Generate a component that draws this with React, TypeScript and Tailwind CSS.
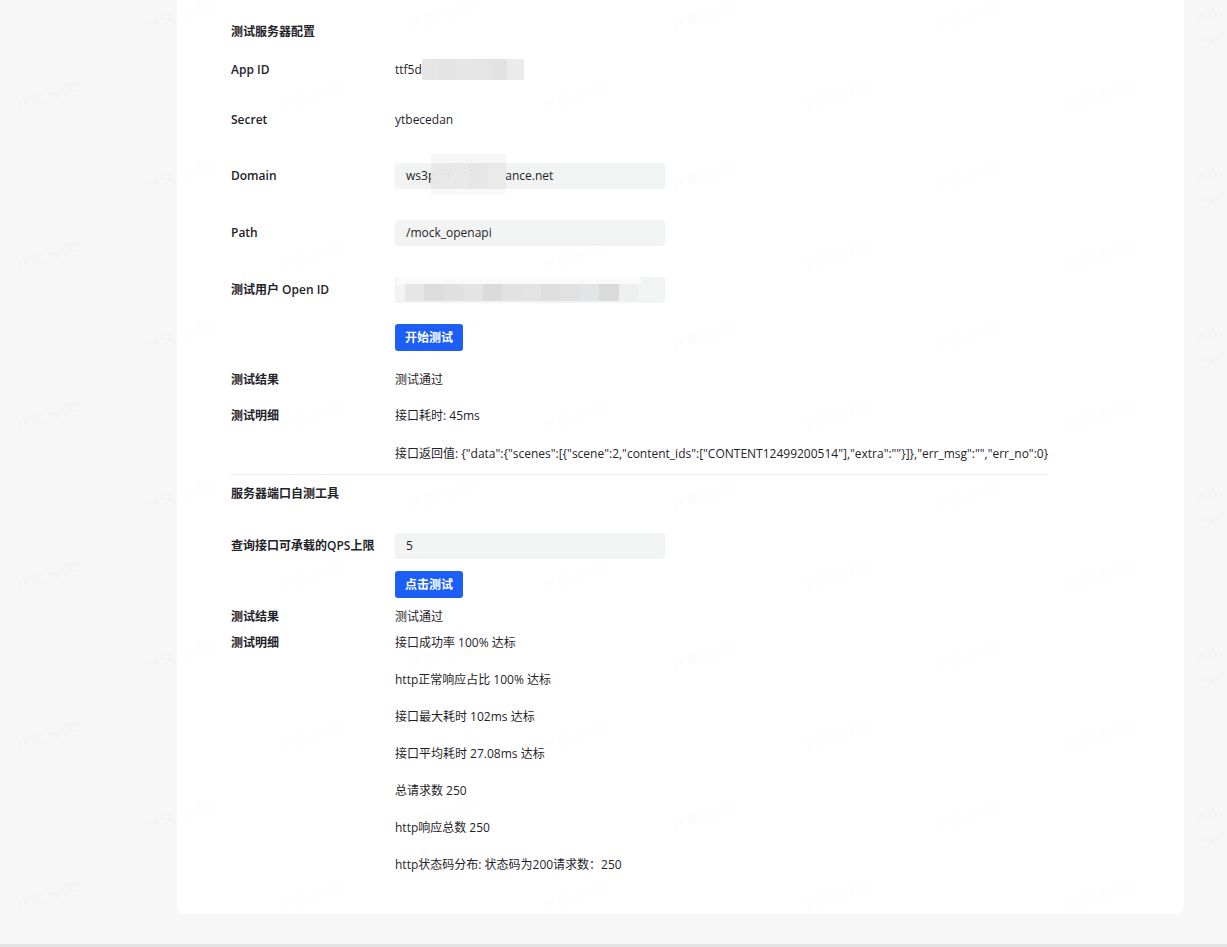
import React from 'react';

const FONT = { fontFamily: '"Open Sans", "Noto Sans CJK SC", sans-serif' };

// 打码块：一排灰色马赛克
const Mosaic: React.FC<{ shades: string[]; cell: string }> = ({ shades, cell }) => (
  <div className="flex h-full">
    {shades.map((c, i) => (
      <div key={i} className={cell} style={{ backgroundColor: c }} />
    ))}
  </div>
);

const Label: React.FC<{ children: React.ReactNode }> = ({ children }) => (
  <div className="w-[164px] shrink-0 font-semibold text-[#1f2329]">{children}</div>
);

const Row: React.FC<{ label?: React.ReactNode; className?: string; children?: React.ReactNode }> = ({
  label,
  className = '',
  children,
}) => (
  <div className={`flex items-center ${className}`}>
    <Label>{label}</Label>
    <div className="flex-1 text-[#1f2329]">{children}</div>
  </div>
);

const InputBox: React.FC<{ children?: React.ReactNode }> = ({ children }) => (
  <div className="relative flex h-[26px] w-[270px] items-center rounded-[3px] bg-[#f2f3f3] px-[11px]">
    {children}
  </div>
);

const Button: React.FC<{ children: React.ReactNode }> = ({ children }) => (
  <button className="h-[27px] rounded-[3px] bg-[#1d5ff6] px-[10px] text-[12px] font-bold text-white">
    {children}
  </button>
);

const Watermarks = () => {
  const rows = Array.from({ length: 12 }, (_, r) => r);
  const cols = Array.from({ length: 5 }, (_, c) => c);
  return (
    <div className="pointer-events-none absolute inset-0 overflow-hidden">
      {rows.map((r) =>
        cols.map((c) => {
          const odd = r % 2 === 0;
          const left = (odd ? 145 : 15) + c * 263;
          const top = r * 80 + 4;
          return (
            <div
              key={`${r}-${c}`}
              className="absolute -rotate-[20deg] text-[15px] text-[#000]/[0.035]"
              style={{ left, top }}
            >
              严风 5689
            </div>
          );
        })
      )}
    </div>
  );
};

export default function App() {
  const details = [
    '接口成功率 100% 达标',
    'http正常响应占比 100% 达标',
    '接口最大耗时 102ms 达标',
    '接口平均耗时 27.08ms 达标',
    '总请求数 250',
    'http响应总数 250',
    'http状态码分布: 状态码为200请求数：250',
  ];

  return (
    <div className="relative min-h-[947px] bg-[#f7f7f7]" style={FONT}>
      <div className="flex min-h-[944px] justify-center pl-[177px] pr-[43px]">
        <div className="mb-auto w-full rounded-b-[8px] bg-white pb-[39px] pl-[54px] pr-[136px] pt-[22px] text-[12px] leading-[20px]">
          <div className="font-semibold text-[#1f2329]">测试服务器配置</div>

          <Row label="App ID" className="mt-[17px]">
            <div className="flex items-center">
              <span>ttf5d</span>
              <div className="h-[21px] w-[102px]">
                <Mosaic
                  cell="w-[17px] h-full"
                  shades={['#e6e6e6', '#e4e4e4', '#e6e6e6', '#e5e5e5', '#e2e2e2', '#ebebeb']}
                />
              </div>
            </div>
          </Row>

          <Row label="Secret" className="mt-[30px]">
            ytbecedan
          </Row>

          <Row label="Domain" className="mt-[33px]">
            <InputBox>
              <span>ws3p</span>
              <span className="ml-[70px]">ance.net</span>
              <div className="absolute left-[36px] top-[-9px] flex h-[41px] w-[75px] flex-col">
                <div className="h-[9px] bg-[#f7f7f7]" />
                <div className="flex-1 bg-[#e9e9e9]">
                  <Mosaic cell="w-[19px] h-full" shades={['#e8e8e8', '#e9e9e9', '#e6e6e6', '#eaeaea']} />
                </div>
                <div className="h-[6px] bg-[#f9f9f9]" />
              </div>
            </InputBox>
          </Row>

          <Row label="Path" className="mt-[31px]">
            <InputBox>/mock_openapi</InputBox>
          </Row>

          <Row label="测试用户 Open ID" className="mt-[31px]">
            <InputBox>
              <div className="absolute left-[2px] top-0 h-[8px] w-[244px] bg-[#fafafa]" />
              <div className="absolute left-[10px] top-[7px] h-[17px] w-[233px]">
                <Mosaic
                  cell="w-[20px] h-full"
                  shades={[
                    '#e4e5e4',
                    '#dcdddc',
                    '#dfe0df',
                    '#e3e4e3',
                    '#dadbda',
                    '#e1e2e1',
                    '#e2e3e2',
                    '#dddedd',
                    '#e0e1e0',
                    '#e2e4e6',
                    '#d9dad9',
                    '#eef0ef',
                  ]}
                />
              </div>
            </InputBox>
          </Row>

          <Row className="mt-[21px]">
            <Button>开始测试</Button>
          </Row>

          <Row label="测试结果" className="mt-[19px]">
            测试通过
          </Row>
          <Row label="测试明细" className="mt-[16px]">
            接口耗时: 45ms
          </Row>
          <Row className="mt-[18px]">
            <span className="whitespace-nowrap">
              接口返回值: {'{"data":{"scenes":[{"scene":2,"content_ids":["CONTENT12499200514"],"extra":""}]},"err_msg":"","err_no":0}'}
            </span>
          </Row>

          <div className="mt-[10px] h-px bg-[#eeeeee]" />

          <div className="mt-[9px] font-semibold text-[#1f2329]">服务器端口自测工具</div>

          <Row label="查询接口可承载的QPS上限" className="mt-[29px]">
            <InputBox>5</InputBox>
          </Row>

          <Row className="mt-[12px]">
            <Button>点击测试</Button>
          </Row>

          <Row label="测试结果" className="mt-[9px]">
            测试通过
          </Row>

          <div className="mt-[6px] flex">
            <Label>测试明细</Label>
            <div className="flex flex-col gap-[17px] text-[#1f2329]">
              {details.map((d) => (
                <div key={d}>{d}</div>
              ))}
            </div>
          </div>
        </div>
      </div>
      <div className="h-[3px] bg-[#e4e4e4]" />
      <Watermarks />
    </div>
  );
}
